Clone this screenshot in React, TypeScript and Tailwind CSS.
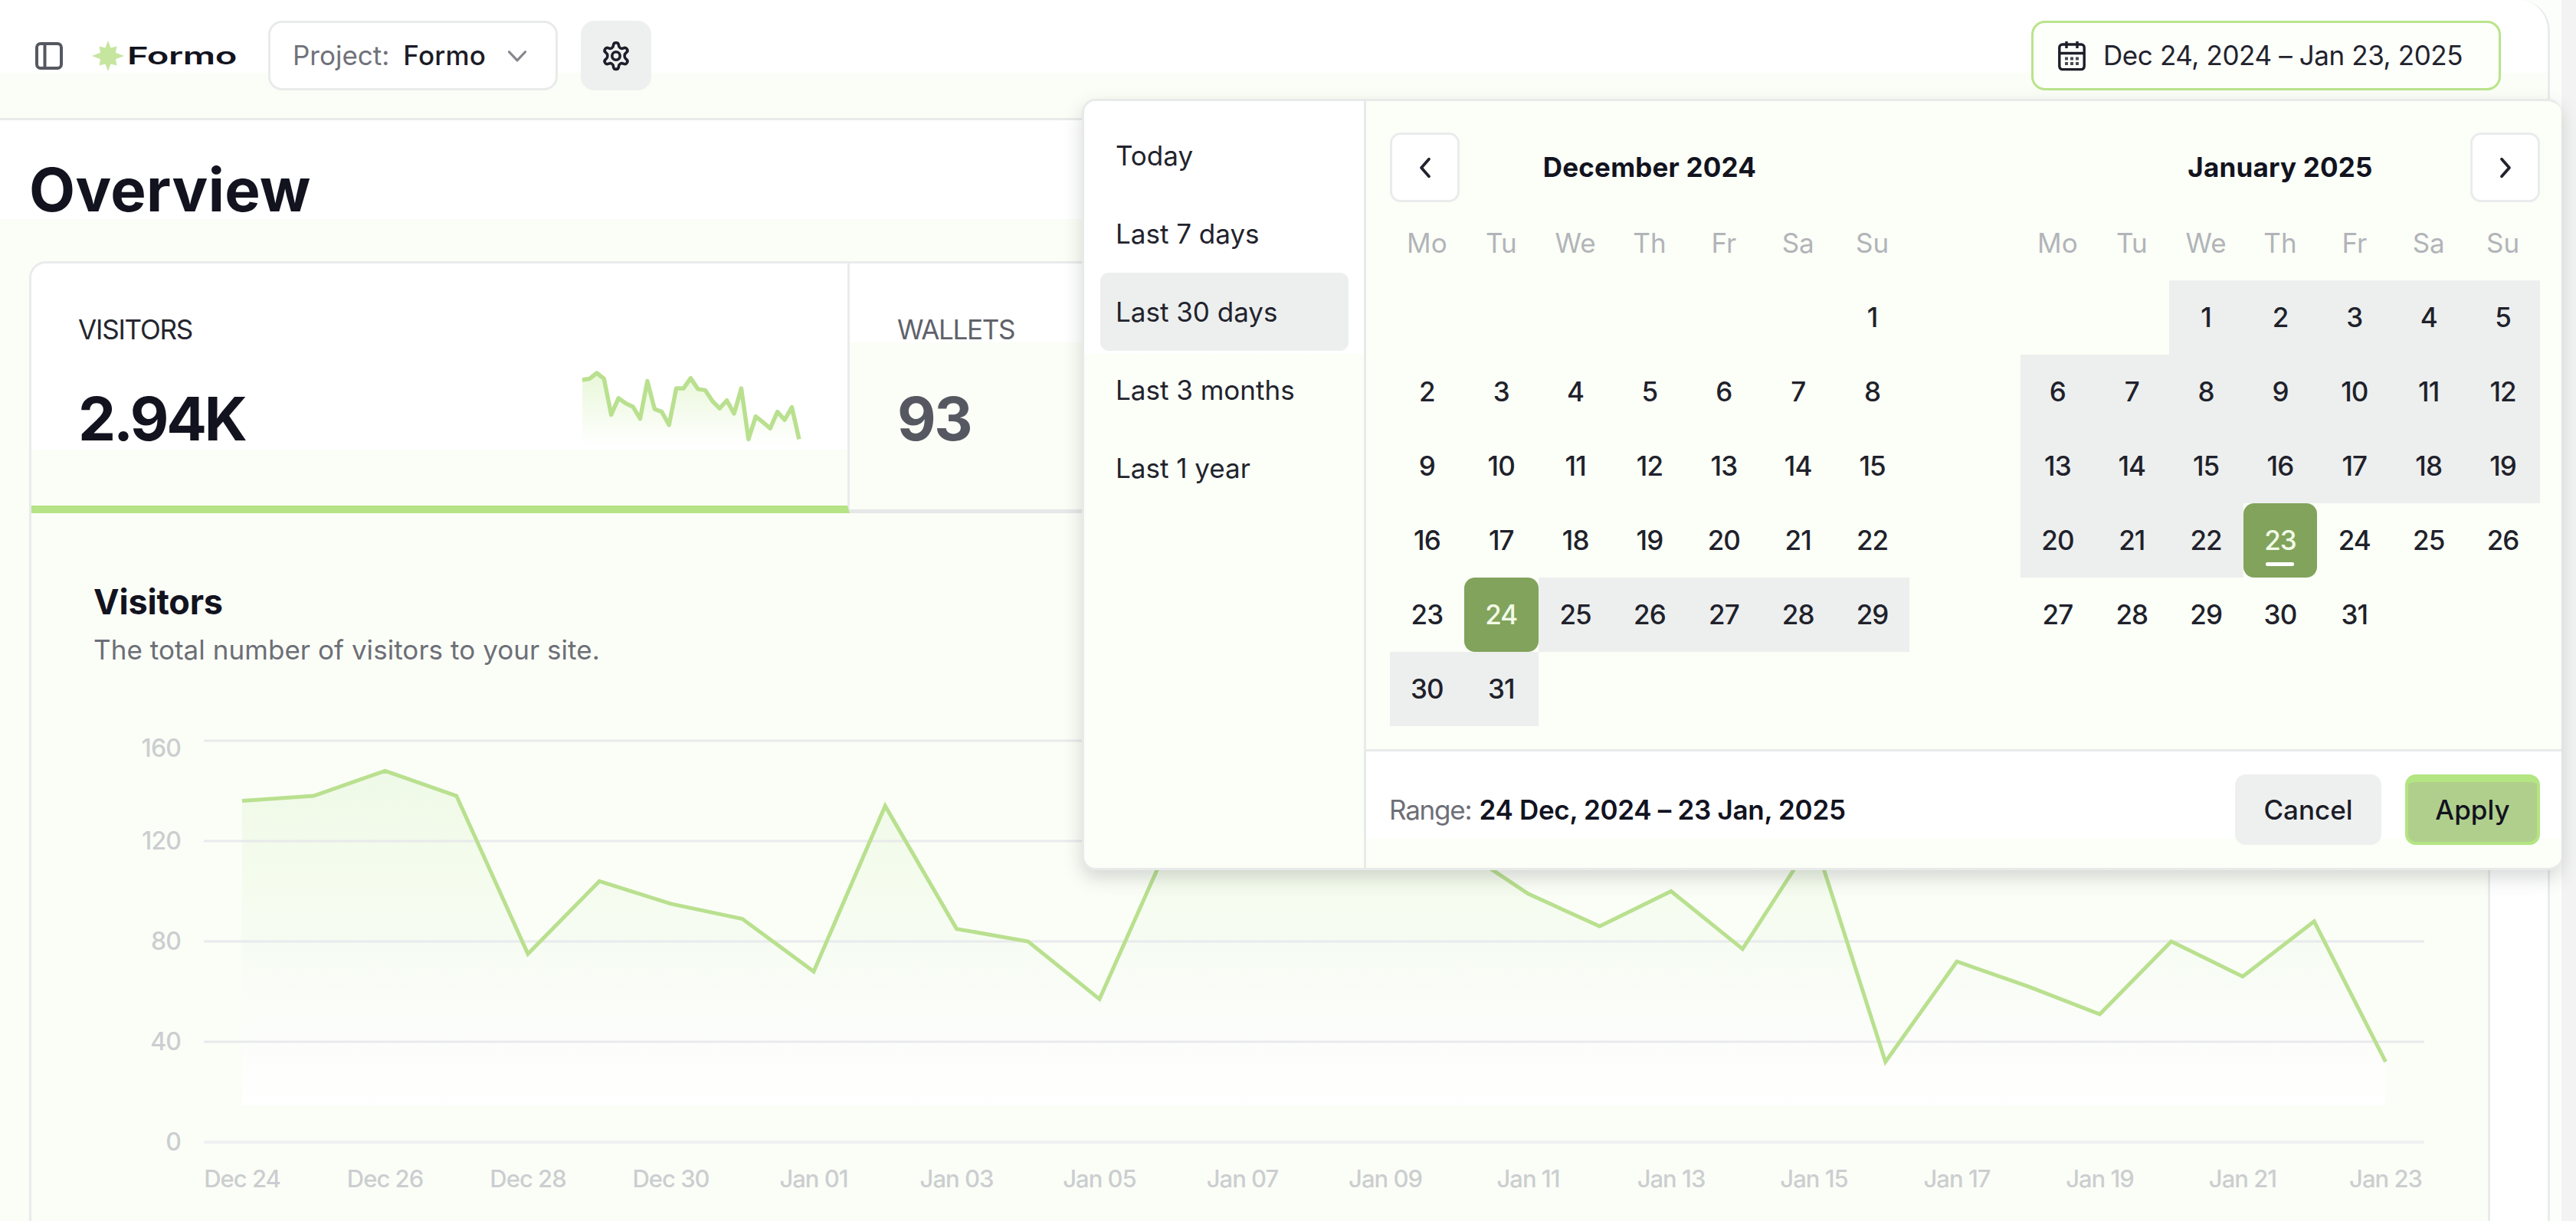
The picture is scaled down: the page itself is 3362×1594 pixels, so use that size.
import { useState } from 'react';
import clsx from 'clsx';

const visitors = [
  136, 138, 148, 138, 75, 104, 95, 89, 68, 134, 85, 80, 57, 121, 121, 139, 120, 118, 99, 86, 100,
  77, 121, 32, 72, 62, 51, 80, 66, 88, 32,
];

const xLabels = [
  'Dec 24', 'Dec 26', 'Dec 28', 'Dec 30', 'Jan 01', 'Jan 03', 'Jan 05', 'Jan 07',
  'Jan 09', 'Jan 11', 'Jan 13', 'Jan 15', 'Jan 17', 'Jan 19', 'Jan 21', 'Jan 23',
];

const presets = ['Today', 'Last 7 days', 'Last 30 days', 'Last 3 months', 'Last 1 year'];
const weekdays = ['Mo', 'Tu', 'We', 'Th', 'Fr', 'Sa', 'Su'];

interface MonthProps {
  title: string;
  offset: number;
  days: number;
  rangeStart: number;
  rangeEnd: number;
  selected: number;
  today?: number;
}

function SidebarIcon() {
  return (
    <svg className="h-[36px] w-[36px]" viewBox="0 0 36 36" fill="none" stroke="#565861" strokeWidth="4">
      <rect x="2" y="2" width="32" height="32" rx="5" />
      <path d="M12.5 2v32" />
    </svg>
  );
}

function Logo() {
  return (
    <div className="flex items-center">
      <svg className="h-[40px] w-[42px]" viewBox="-21 -20 42 40" fill="#c6e6a0">
        <path d="M0-20 3.6-10.5 11.5-12.5 10-4.2 21 0 10 4.2 11.5 12.5 3.6 10.5 0 20-3.6 10.5-11.5 12.5-10 4.2-21 0-10-4.2-11.5-12.5-3.6-10.5Z" />
      </svg>
      <span className="ml-[4px] w-[144px] origin-left scale-x-[1.52] text-[31px] font-semibold leading-none tracking-[-0.3px] text-[#12131f]">
        Formo
      </span>
    </div>
  );
}

function GearIcon() {
  return (
    <svg className="h-[40px] w-[40px]" viewBox="0 0 40 40" fill="none" stroke="#1d1e29" strokeWidth="3.6" strokeLinejoin="round">
      <path d="M16.5 6.2C16.8 1.5 23.2 1.5 23.5 6.2 23.7 9.6 26.6 11.2 29.6 9.8 33.8 7.8 37 13.2 33.2 15.8 30.4 17.8 30.4 22.2 33.2 24.2 37 26.8 33.8 32.2 29.6 30.2 26.6 28.8 23.7 30.4 23.5 33.8 23.2 38.5 16.8 38.5 16.5 33.8 16.3 30.4 13.4 28.8 10.4 30.2 6.2 32.2 3 26.8 6.8 24.2 9.6 22.2 9.6 17.8 6.8 15.8 3 13.2 6.2 7.8 10.4 9.8 13.4 11.2 16.3 9.6 16.5 6.2Z" />
      <circle cx="20" cy="20" r="5.2" />
    </svg>
  );
}

function CalendarIcon() {
  return (
    <svg className="h-[40px] w-[36px]" viewBox="0 0 36 40" fill="none" stroke="#1d1e29" strokeWidth="3.4">
      <rect x="1.8" y="5" width="32.4" height="32.6" rx="4" />
      <path d="M1.8 16.5h32.4" />
      <path d="M11 1v9M25 1v9" />
      <path d="M9 23.5h4M16 23.5h4M23 23.5h4M9 30h4M16 30h4M23 30h4" strokeWidth="4" stroke="#4a4b54" />
    </svg>
  );
}

function Chevron({ d, className }: { d: string; className: string }) {
  return (
    <svg className={className} viewBox="0 0 24 24" fill="none" stroke="currentColor" strokeLinecap="round" strokeLinejoin="round">
      <path d={d} />
    </svg>
  );
}

function Header() {
  return (
    <header className="flex h-[157px] items-start justify-between border-b-[3px] border-[#e9ebeb] bg-linear-to-b from-white from-62% to-[#fbfef7] to-62% pl-[46px] pr-[61px] pt-[27px]">
      <div className="flex h-[91px] items-center">
        <SidebarIcon />
        <div className="ml-[38px]">
          <Logo />
        </div>
        <button className="ml-[40px] flex h-[91px] w-[378px] items-center rounded-[18px] border-[3px] border-[#e9ebeb] bg-white pl-[29px] text-[35px]">
          <span className="text-[#70727a]">Project:</span>
          <span className="ml-[18px] font-medium tracking-[0.2px] text-[#1b1c27]">Formo</span>
          <Chevron d="M3 7.5 12 17 21 7.5" className="ml-[27px] h-[28px] w-[28px] stroke-[2.8] text-[#85878d]" />
        </button>
        <button className="ml-[30px] flex h-[91px] w-[92px] items-center justify-center rounded-[18px] bg-[#eef0ef]">
          <GearIcon />
        </button>
      </div>
      <button className="flex h-[91px] w-[613px] items-center rounded-[18px] border-[3px] border-[#b9e48c] bg-[#fdfffb] pl-[32px] text-[35px] tracking-[-0.4px] text-[#22232d]">
        <CalendarIcon />
        <span className="ml-[23px]">Dec 24, 2024 – Jan 23, 2025</span>
      </button>
    </header>
  );
}

function Sparkline() {
  const points = visitors.map((v, i) => `${2 + i * 9.43},${5 + (148 - v) * 0.745}`).join(' ');
  return (
    <svg className="h-[100px] w-[290px]" viewBox="0 0 290 100" fill="none">
      <defs>
        <linearGradient id="spark" x1="0" y1="0" x2="0" y2="1">
          <stop offset="0" stopColor="#b3e57f" stopOpacity="0.3" />
          <stop offset="1" stopColor="#b3e57f" stopOpacity="0" />
        </linearGradient>
      </defs>
      <polygon points={`2,100 ${points} 285,100`} fill="url(#spark)" />
      <polyline points={points} stroke="#b9e08f" strokeWidth="5.5" strokeLinejoin="round" />
    </svg>
  );
}

function StatTabs() {
  return (
    <div className="flex h-[326px]">
      <div className="flex w-[1068px] flex-col border-b-[10px] border-r-[3px] border-b-[#b5e385] border-r-[#e9ebed] bg-linear-to-b from-white from-77% to-[#fbfef7] to-77% pl-[61px]">
        <div className="mt-[62px] text-[35px] leading-[48px] tracking-[-1.2px] text-[#24252e]">VISITORS</div>
        <div className="mt-[23px] flex items-start">
          <div className="w-[656px] pt-[22px] text-[78px] font-bold leading-[96px] tracking-[-3.2px] text-[#12131f]">2.94K</div>
          <div className="pt-[5px]">
            <Sparkline />
          </div>
        </div>
      </div>
      <div className="flex-1 border-b-[5px] border-[#e6e8e8] bg-linear-to-b from-white from-32% to-[#fbfef7] to-32% pl-[62px]">
        <div className="mt-[62px] text-[35px] leading-[48px] tracking-[-1.3px] text-[#60626a]">WALLETS</div>
        <div className="mt-[45px] text-[78px] font-bold leading-[96px] tracking-[-2.4px] text-[#565861]">93</div>
      </div>
    </div>
  );
}

// plot area: 40 units of the y axis are 131px high, one day is 93.25px wide
const px = (i: number) => 316 + i * 93.25;
const py = (v: number) => 1491 - v * 3.275;

function VisitorsChart() {
  const line = visitors.map((v, i) => `${px(i)},${py(v)}`).join(' ');
  return (
    <svg className="block h-[700px] w-[3206px]" viewBox="41 899 3206 700" fill="none">
      <defs>
        <linearGradient id="area" gradientUnits="userSpaceOnUse" x1="0" y1="1000" x2="0" y2="1450">
          <stop offset="0" stopColor="#eff9e7" />
          <stop offset="0.3" stopColor="#f4fced" />
          <stop offset="0.55" stopColor="#f7fcf4" />
          <stop offset="0.8" stopColor="#fcfdfb" />
          <stop offset="1" stopColor="#ffffff" />
        </linearGradient>
      </defs>
      <polygon points={`${px(0)},1443 ${line} ${px(30)},1443`} fill="url(#area)" />
      {[0, 40, 80, 120, 160].map((v) => (
        <g key={v}>
          <path d={`M266 ${py(v)}H3164`} stroke={v === 0 ? '#f0f1f2' : '#e8eaec'} strokeWidth={v === 0 ? 4 : 3} />
          <text x="236" y={py(v) + (v === 160 ? 21 : 11)} textAnchor="end" className="fill-[#cbced0] text-[32px] font-medium tracking-[-0.9px]">
            {v}
          </text>
        </g>
      ))}
      <polyline points={line} stroke="#b9e08f" strokeWidth="5" />
      {xLabels.map((label, i) => (
        <text key={label} x={px(i * 2)} y="1550" textAnchor="middle" className="fill-[#cbced0] text-[31px] font-medium tracking-[-1px]">
          {label}
        </text>
      ))}
    </svg>
  );
}

function Month({ title, offset, days, rangeStart, rangeEnd, selected, today }: MonthProps) {
  return (
    <div className="w-[678px]">
      <div className="flex h-[91px] items-center justify-center text-[35px] font-bold tracking-[0.2px] text-[#12131f]">{title}</div>
      <div className="mt-[6px] mb-[2px] grid h-[94px] grid-cols-7 items-center text-center text-[35px] text-[#b2b4b9]">
        {weekdays.map((d) => (
          <span key={d}>{d}</span>
        ))}
      </div>
      <div className="grid auto-rows-[97px] grid-cols-7 text-[35px] font-medium tracking-[-0.9px] text-[#20212b]">
        {Array.from({ length: offset }, (_, i) => (
          <span key={`empty-${i}`} />
        ))}
        {Array.from({ length: days }, (_, i) => i + 1).map((day) => (
          <button
            key={day}
            className={clsx(
              'relative flex items-center justify-center',
              day >= rangeStart && day <= rangeEnd && day !== selected && 'bg-[#edefee]',
              day === selected && 'rounded-[14px] bg-[#82a35c] text-[#f2fbe8]'
            )}
          >
            {day}
            {day === today && <span className="absolute bottom-[15px] h-[5px] w-[37px] rounded-[2px] bg-white" />}
          </button>
        ))}
      </div>
    </div>
  );
}

function RangePicker() {
  const [preset, setPreset] = useState('Last 30 days');

  return (
    <div className="absolute left-[1412px] top-[129px] flex h-[1007px] w-[1931px] overflow-hidden rounded-[18px] border-[3px] border-r-0 border-[#e8eaea] bg-[#fbfff7] shadow-[0_10px_24px_rgba(60,65,65,0.2)]">
      <div className="w-[368px] shrink-0 border-r-[3px] border-[#e8eaea] bg-linear-to-b from-white from-33% to-[#fbfff7] to-33% pl-[21px] pr-[20px] pt-[20px]">
        {presets.map((p) => (
          <button
            key={p}
            onClick={() => setPreset(p)}
            className={clsx(
              'flex h-[102px] w-full items-center rounded-[11px] pl-[20px] text-[35px] text-[#22232d]',
              p === preset && 'bg-[#edefee]'
            )}
          >
            {p}
          </button>
        ))}
      </div>
      <div className="flex-1">
        <div className="flex h-[849px] justify-between border-b-[3px] border-[#e8eaea] pl-[31px] pr-[28px] pt-[41px]">
          <Month title="December 2024" offset={6} days={31} rangeStart={24} rangeEnd={31} selected={24} />
          <Month title="January 2025" offset={2} days={31} rangeStart={1} rangeEnd={23} selected={23} today={23} />
          <button className="absolute left-[399px] top-[41px] flex h-[91px] w-[91px] items-center justify-center rounded-[14px] border-[3px] border-[#eaecec] bg-white text-[#22232d]">
            <Chevron d="M15.5 4 8.5 12l7 8" className="h-[34px] w-[34px] stroke-[2.7]" />
          </button>
          <button className="absolute right-[28px] top-[41px] flex h-[91px] w-[91px] items-center justify-center rounded-[14px] border-[3px] border-[#eaecec] bg-white text-[#22232d]">
            <Chevron d="M8.5 4l7 8-7 8" className="h-[34px] w-[34px] stroke-[2.7]" />
          </button>
        </div>
        <div className="flex h-[152px] items-center bg-linear-to-b from-white from-75% to-[#fbfff7] to-75% pl-[30px] pr-[28px] text-[35px]">
          <span className="tracking-[-1.2px] text-[#6d6f77]">Range:</span>
          <span className="ml-[10px] font-semibold tracking-[-0.3px] text-[#12131f]">24 Dec, 2024 – 23 Jan, 2025</span>
          <button className="ml-auto h-[92px] w-[191px] rounded-[14px] bg-[#eef0f0] font-medium text-[#1b1c27]">Cancel</button>
          <button className="ml-[31px] h-[92px] w-[176px] rounded-[14px] border-[4px] border-t-[10px] border-[#b3e582] bg-[#b1cf8c] pb-[5px] font-medium text-[#12131f]">
            Apply
          </button>
        </div>
      </div>
    </div>
  );
}

export default function App() {
  return (
    <div className="relative flex h-[1594px] w-[3362px] overflow-hidden bg-[#fcfefb] font-['Inter',sans-serif]">
      <div className="w-[3328px] shrink-0 overflow-hidden rounded-tr-[40px] border-r-[3px] border-[#e9ebec] bg-white">
        <Header />
        <main className="h-[1437px] w-[3250px] bg-linear-to-b from-white from-9% to-[#fbfef7] to-9% pl-[38px]">
          <h1 className="pt-[39px] text-[78px] font-bold leading-[104px] tracking-[0.4px] text-[#12131f]">Overview</h1>
          <section className="mt-[41px] h-[1300px] w-[3212px] overflow-hidden rounded-t-[22px] border-[3px] border-[#e9ebec] bg-[#fbfef7]">
            <StatTabs />
            <div className="flex h-[229px] flex-col pl-[81px] pt-[86px]">
              <h2 className="text-[45px] font-bold leading-[60px] tracking-[-0.2px] text-[#12131f]">Visitors</h2>
              <p className="mt-[8px] text-[35px] leading-[48px] tracking-[0.05px] text-[#6d6f77]">The total number of visitors to your site.</p>
            </div>
            <VisitorsChart />
          </section>
        </main>
      </div>
      <div className="ml-auto w-[19px] bg-[#f3f3f3]" />
      <RangePicker />
    </div>
  );
}
